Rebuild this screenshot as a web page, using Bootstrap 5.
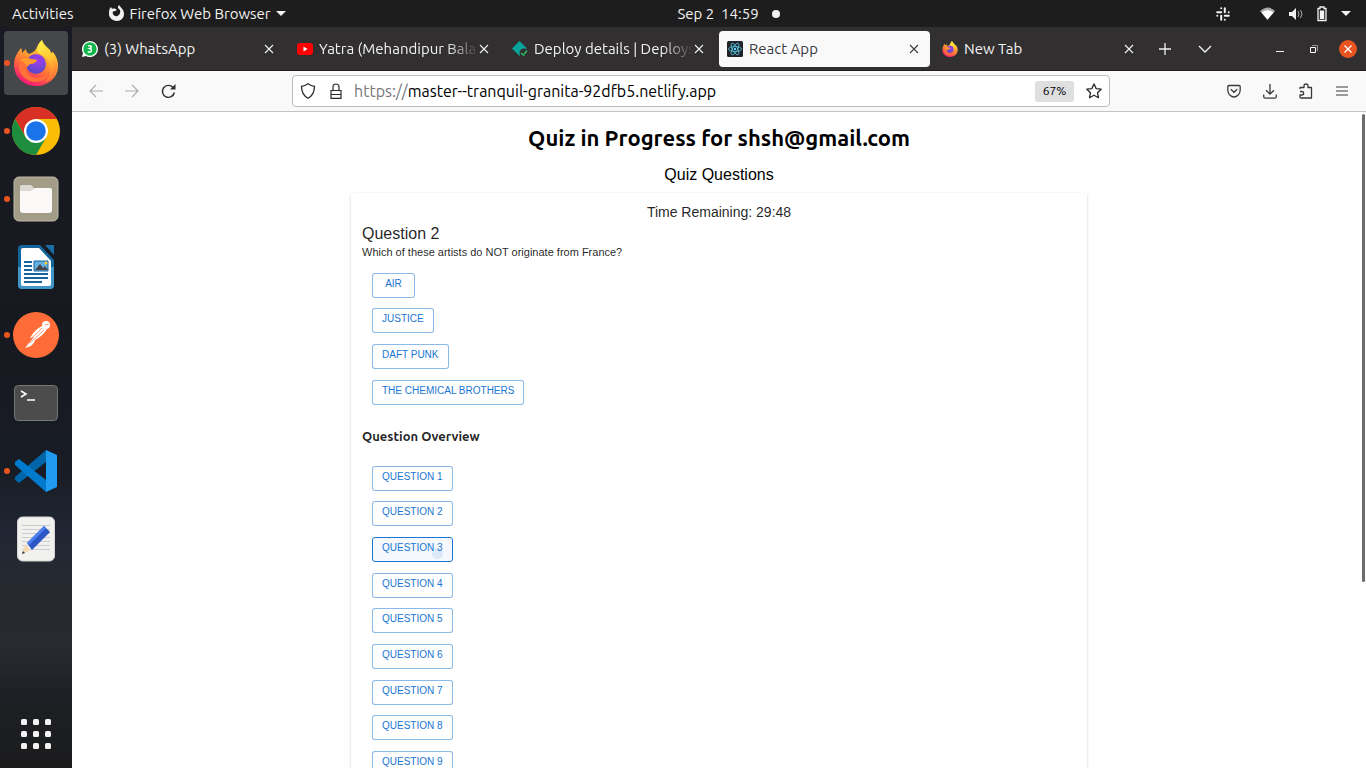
<!DOCTYPE html>
<html lang="en">
<head>
<meta charset="utf-8">
<meta name="viewport" content="width=device-width, initial-scale=1">
<title>React App</title>
<link href="https://cdn.jsdelivr.net/npm/bootstrap@5.3.0/dist/css/bootstrap.min.css" rel="stylesheet">
<style>
  body { font-family: Ubuntu, "Noto Sans", sans-serif; font-size: 15px; line-height: 20px; color: #000; background: #fff; }
  button, input { font: inherit; color: inherit; }
  svg { display: block; flex: none; }
  .plain { border: 0; background: none; padding: 0; white-space: nowrap; }
  .grow { flex: 1; min-width: 0; min-height: 0; }

  .system-bar { height: 27px; flex: none; background: #1d1d1d; color: #f2f2f2; display: grid; grid-template-columns: 7fr auto 6fr; align-items: center; padding: 0 15px 0 12px; }
  .app-menu { margin-left: 34px; gap: 5px; }
  .indicators { gap: 14px; }
  .tray { margin-right: 16px; }
  .dock { width: 72px; padding: 4px 4px 0; background: linear-gradient(#191a22 0%, #171920 40%, #181c24 60%, #202633 68%, #262a30 76%, #272a31 84%, #1d2024 90%, #1b1b1c 100%); }
  .dock-app { position: relative; width: 64px; height: 64px; margin-bottom: 4px; border-radius: 4px; display: flex; align-items: center; justify-content: center; }
  .dock-app.current { background: #46474b; }
  .dock-app.running::before { content: ""; position: absolute; left: 0; top: 29px; width: 6px; height: 6px; border-radius: 50%; background: #e95420; }

  .tab-strip { height: 44px; background: #322f30; color: #f2f2f2; border-bottom: 1px solid #1f1d1e; padding: 1px 1px 0 2px; }
  .browser-tab { height: 36px; margin-right: 4px; padding: 0 11px 0 8px; border-radius: 4px; flex: 0 1 211px; min-width: 0; }
  .browser-tab.last { margin-right: 0; }
  .browser-tab.current { background: #f9f9fa; color: #3c3b3d; }
  .tab-title { flex: 1; min-width: 0; overflow: hidden; text-align: left; margin-left: 6px; }
  .tab-title.faded { -webkit-mask-image: linear-gradient(to left, transparent, #000 32px); mask-image: linear-gradient(to left, transparent, #000 32px); }
  .tab-tool { width: 40px; height: 30px; }
  .window-tool { width: 34px; height: 34px; }
  .toolbar-row { height: 41px; background: #f9f9fa; border-bottom: 1px solid #c4c4c6; color: #3a3a3c; padding: 0 6px; }
  .tool { width: 36px; height: 30px; }
  .address { height: 32px; flex: 0 1 818px; min-width: 0; background: #fff; border: 1px solid #bdbdc0; border-radius: 4px; padding: 0 7px; font-size: 16px; }
  .padlock { margin: 0 12px 0 14px; }
  .address label { color: #77777a; }
  .address input { border: 0; outline: 0; padding: 0; background: transparent; color: #000; }
  .zoom-level { background: #dfdfe0; border-radius: 3px; font-size: 12px; width: 39px; height: 21px; color: #000; }

  .viewport { position: relative; overflow: hidden; }
  .scroll-thumb { position: absolute; right: 1px; top: 2px; width: 3px; height: 61vh; background: #6b6b6b; border-radius: 2px; }
  .quiz { font-family: "Liberation Sans", Arial, sans-serif; }
  .quiz-title { font: bold 22px/28px Ubuntu, "Noto Sans", sans-serif; margin: 12px 0 0; }
  .quiz-sub { font-size: 16px; line-height: 24px; margin: 11px 0 6px; }
  .quiz-sheet { width: 100%; max-width: 736px; margin: 0 auto; padding: 10px 11px 11px; border-radius: 3px; color: rgba(0,0,0,.87); box-shadow: 0 1px 3px rgba(0,0,0,.2); }
  .timer { font-size: 14px; line-height: 18px; margin: 0; }
  .question-title { font-size: 16px; line-height: 22px; margin: 2px 0 0; }
  .question-text { font-size: 11px; line-height: 14px; margin: 0 0 14px; }
  .overview-title { font: bold 13px/18px Ubuntu, "Noto Sans", sans-serif; margin: 12px 0 21px; }
  .choices { display: flex; flex-direction: column; align-items: flex-start; padding-left: 10px; }
  .choice { min-width: 43px; height: 25px; margin-bottom: 11px; padding: 0 9px 3px; border: 1px solid rgba(25,118,210,.5); border-radius: 3px; background: #fff; color: #1976d2; font-size: 10px; line-height: 12px; text-transform: uppercase; }
  .choice:nth-child(3n+1) { margin-bottom: 10px; }
  .choice.hovered { position: relative; background: #f5f9fd; border-color: #1976d2; }
  .choice.hovered::after { content: ""; position: absolute; right: 9px; bottom: 2px; width: 11px; height: 11px; border-radius: 50%; background: rgba(25,118,210,.12); }
</style>
</head>
<body class="vh-100 overflow-hidden d-flex flex-column">

<svg width="0" height="0" class="position-absolute" aria-hidden="true">
  <defs>
    <linearGradient id="foxBody" x1=".8" y1="0" x2=".3" y2="1"><stop offset="0" stop-color="#ffe63b"/><stop offset=".35" stop-color="#ffb22e"/><stop offset=".65" stop-color="#ff6a3a"/><stop offset="1" stop-color="#f2127c"/></linearGradient>
    <radialGradient id="foxGlobe" cx=".6" cy=".3" r=".8"><stop offset="0" stop-color="#a13bf0"/><stop offset=".5" stop-color="#7a46d8"/><stop offset="1" stop-color="#4a46c0"/></radialGradient>
    <linearGradient id="foxTail" x1="0" y1="0" x2=".4" y2="1"><stop offset="0" stop-color="#fff44f"/><stop offset=".6" stop-color="#ffc633"/><stop offset="1" stop-color="#ff7b35"/></linearGradient>
    <symbol id="firefox" viewBox="0 0 46 46">
      <path d="M8 8c1 2 1 3 1 5l4-4c0 2 1 4 3 5 5-2 7-4 8-7 1-3 3-5 5-7 1 4 5 7 8 10l1 3 2-1c3 4 5 8 5 14 0 12-10 20-22 20S1 37 1 25C1 18 4 13 8 8z" fill="url(#foxBody)"/>
      <path d="M29 0c1 5 5 7 8 11 2 3 3 6 3 10 1-3 0-6-1-9 3 3 5 8 5 13 0 8-5 14-12 17 5-5 7-11 5-18-2-7-7-9-12-11-2-5 1-10 4-13z" fill="url(#foxTail)"/>
      <circle cx="23" cy="24" r="10" fill="url(#foxGlobe)"/>
      <path d="M7 20c3-3 7-4 11-1l6 1c-1 3-5 4-7 4-1 1-3 3-4 5 1 5 5 9 11 9 6 0 10-3 13-8-1 7-7 12-15 12S6 35 6 27z" fill="#ff7139"/>
      <path d="M7 20c4-3 8-2 11-1l6 1c-1 3-5 4-7 4l-3 2c-2-3-4-4-7-6z" fill="#ff9b2e"/>
    </symbol>
    <symbol id="cross" viewBox="0 0 10 10"><path d="M1 1l8 8M9 1l-8 8" stroke="currentColor" stroke-width="1.1" fill="none"/></symbol>
  </defs>
</svg>

<header class="system-bar">
  <div class="d-flex align-items-center">
    <button class="plain">Activities</button>
    <button class="plain app-menu d-flex align-items-center">
      <svg width="17" height="17" viewBox="0 0 17 17"><path d="M3 2l1 2c2-1 4 0 5 1L7 6c-2 0-3 1-2 3 1 3 6 3 7-1 1-3-1-4-2-5 0-1 0-2 1-3 1 2 5 4 5 9 0 4-3 7-7 7s-8-3-8-7c0-3 0-5 2-7z" fill="#f2f2f2"/></svg>
      <span>Firefox Web Browser</span>
      <svg width="10" height="6" viewBox="0 0 10 6"><path d="M0 0h10L5 5z" fill="#f2f2f2"/></svg>
    </button>
  </div>
  <button class="plain d-flex align-items-center"><span>Sep 2&nbsp; 14:59</span>
    <svg class="ms-2" width="14" height="10" viewBox="0 0 14 10"><circle cx="9" cy="5" r="4" fill="#f2f2f2"/></svg></button>
  <div class="indicators d-flex align-items-center justify-content-end">
    <svg class="tray" width="14" height="14" viewBox="0 0 14 14" fill="none" stroke="#f2f2f2" stroke-width="2" stroke-linecap="round"><path d="M1.200 5.200h4M5.200 1.300v.01M8.800 1.200v4M12.700 5.200h.01M8.800 8.800h4M8.800 12.700v.01M5.200 8.800v4M1.300 8.800h.01"/></svg>
    <svg width="15" height="13" viewBox="0 0 15 13"><path d="M0 4Q7.500-3 15 4L7.500 13z" fill="#aaa"/><path d="M1.500 5.500Q7.500 1 13.500 5.500L7.500 12.500z" fill="#fff"/></svg>
    <svg width="14" height="14" viewBox="0 0 14 14"><path d="M0 5h3l4-4v12L3 9H0z" fill="#f2f2f2"/><path d="M9 4q2 3 0 6M11.500 3q3 4 0 8" stroke="#aaa" fill="none"/></svg>
    <svg width="10" height="16" viewBox="0 0 10 16"><path d="M3 1h4v1.500h2v12H1v-12h2z" fill="none" stroke="#f2f2f2" stroke-width="1.300"/><path d="M2.800 4.500h4.400v8.500H2.800z" fill="#f2f2f2"/></svg>
    <svg width="10" height="6" viewBox="0 0 10 6"><path d="M0 0h10L5 5z" fill="#f2f2f2"/></svg>
  </div>
</header>

<div class="grow d-flex">
  <nav class="dock d-flex flex-column flex-shrink-0" aria-label="Applications">
    <button class="plain dock-app current running" aria-label="Firefox"><svg width="46" height="46"><use href="#firefox"/></svg></button>
    <button class="plain dock-app running" aria-label="Chrome"><svg width="48" height="48" viewBox="0 0 48 48"><circle cx="24" cy="24" r="24" fill="#fbbc04"/><path d="M24 0a24 24 0 0 1 21 12H24L13.600 30 3.200 12A24 24 0 0 1 24 0z" fill="#d93025"/><path d="M3.200 12A24 24 0 0 0 24 48L34.400 30H13.600z" fill="#1e8e3e"/><circle cx="24" cy="24" r="12" fill="#fff"/><circle cx="24" cy="24" r="9.800" fill="#1a73e8"/></svg></button>
    <button class="plain dock-app running" aria-label="Files"><svg width="46" height="46" viewBox="0 0 46 46"><rect x="1" y="1" width="44" height="44" rx="5" fill="#a39d88" stroke="#beb9a8"/><path d="M7 13V11q0-2 2-2h9l4 4h14q2 0 2 2v4H7z" fill="#dedad2"/><path d="M7 15h11l4-3h15q2 0 2 2v20q0 3-3 3H10q-3 0-3-3z" fill="#faf9f7"/></svg></button>
    <button class="plain dock-app" aria-label="Writer"><svg width="38" height="46" viewBox="0 0 38 46"><path d="M5 1h18l14 15v25q0 4-4 4H5q-4 0-4-4V5q0-4 4-4z" fill="#15659d"/><path d="M1 23h36v18q0 4-4 4H5q-4 0-4-4z" fill="#3f96c9"/><path d="M6 4h16l12 13v23q0 2-2 2H6q-2 0-2-2V6q0-2 2-2z" fill="#fff"/><path d="M28 1h9v10z" fill="#1b6da6"/><path d="M7 18h8M7 22h8M7 26h8M7 30h24M7 34h24M7 38h18" stroke="#15659d" stroke-width="2"/><path d="M17 17h14v10H17z" fill="#64b2e3" stroke="#15659d"/><path d="M18 26l5-6 3 4 2-2 3 4z" fill="#444"/><circle cx="29" cy="19" r="1.500" fill="#fc3"/></svg></button>
    <button class="plain dock-app running" aria-label="Postman"><svg width="46" height="46" viewBox="0 0 46 46"><circle cx="23" cy="23" r="23" fill="#ff6c37"/><circle cx="33" cy="13" r="4" fill="#fff"/><path d="M29 14q-7 3-12 12l4-1-9 11-3 1 9-3q4-4 4-6 8-4 12-11z" fill="#fff"/><path d="M31 18L17 31M29 16L18 27M32 13l4-1" stroke="#ff6c37" stroke-width=".7"/></svg></button>
    <button class="plain dock-app" aria-label="Terminal"><svg width="44" height="36" viewBox="0 0 44 36"><rect x=".5" y=".5" width="43" height="35" rx="4" fill="#4c4c4c" stroke="#777"/><path d="M7 6l5 3-5 3M13 15h8" fill="none" stroke="#fff" stroke-width="1.600"/></svg></button>
    <button class="plain dock-app running" aria-label="Code"><svg width="42" height="42" viewBox="0 0 42 42"><path d="M31 0L0 27v3l4 3L31 12z" fill="#0065a9"/><path d="M31 42L0 15v-3l4-3 27 21z" fill="#007acc"/><path d="M31 0l11 5v32l-11 5z" fill="#1f9cf0"/></svg></button>
    <button class="plain dock-app" aria-label="Text editor"><svg width="38" height="46" viewBox="0 0 38 46"><rect x=".5" y="1" width="37" height="44" rx="5" fill="#f1f1ef" stroke="#d4d4d0"/><path d="M5 9.500h28M5 13.500h28M5 17.500h28M5 21.500h28M5 25.500h28M5 29.500h28M5 33.500h28" stroke="#ccc"/><path d="M5 38l3-9 6 5z" fill="#f7d9b5"/><path d="M5 38l1-3 2 2z" fill="#333"/><path d="M10 27L27 10l6 6-18 18z" fill="#2a56c6"/><path d="M10 27L27 10l2 2-17 17z" fill="#4f80f0"/></svg></button>
    <button class="plain mt-auto mx-auto mb-3" aria-label="Show applications"><svg width="32" height="34" viewBox="0 0 32 34" fill="#f2f2f0"><rect x="1" y="1" width="6" height="6" rx="1.500"/><rect x="13" y="1" width="6" height="6" rx="1.500"/><rect x="25" y="1" width="6" height="6" rx="1.500"/><rect x="1" y="13" width="6" height="6" rx="1.500"/><rect x="13" y="13" width="6" height="6" rx="1.500"/><rect x="25" y="13" width="6" height="6" rx="1.500"/><rect x="1" y="25" width="6" height="6" rx="1.500"/><rect x="13" y="25" width="6" height="6" rx="1.500"/><rect x="25" y="25" width="6" height="6" rx="1.500"/></svg></button>
  </nav>

  <div class="grow d-flex flex-column">
    <div class="tab-strip d-flex align-items-center flex-shrink-0">
      <div class="browser-tab d-flex align-items-center">
        <svg width="16" height="16" viewBox="0 0 16 16"><path d="M0 16l1-4a8 8 0 1 1 3 3z" fill="#fff"/><circle cx="8" cy="8" r="6.700" fill="#12b84b"/><path d="M6 5.200q1.800-1 3 0 .8 1.600-1.400 2.400 2.600.6 1.600 2.600-1.200 1.400-3.500.5" stroke="#fff" stroke-width="1.500" fill="none"/></svg>
        <button class="plain tab-title">(3) WhatsApp</button><button class="plain" aria-label="Close tab"><svg width="10" height="10"><use href="#cross"/></svg></button>
      </div>
      <div class="browser-tab d-flex align-items-center">
        <svg width="16" height="16" viewBox="0 0 16 16"><rect y="2" width="16" height="12" rx="3" fill="#f00"/><path d="M6.500 5.500v5l4-2.500z" fill="#fff"/></svg>
        <button class="plain tab-title faded">Yatra (Mehandipur Bala</button><button class="plain" aria-label="Close tab"><svg width="10" height="10"><use href="#cross"/></svg></button>
      </div>
      <div class="browser-tab d-flex align-items-center">
        <svg width="16" height="16" viewBox="0 0 16 16"><path d="M7.500 0L15 7.500 7.500 15 0 7.500z" fill="#0aa39c"/><circle cx="12" cy="12" r="4.500" fill="#322f30"/><path d="M9 12l2.500 2L15 9.500" stroke="#27b35a" stroke-width="1.600" fill="none"/></svg>
        <button class="plain tab-title faded">Deploy details | Deploys</button><button class="plain" aria-label="Close tab"><svg width="10" height="10"><use href="#cross"/></svg></button>
      </div>
      <div class="browser-tab current d-flex align-items-center">
        <svg width="16" height="16" viewBox="0 0 16 16"><rect width="16" height="16" rx="1.500" fill="#20232a"/><g fill="none" stroke="#61dafb" stroke-width=".7"><ellipse cx="8" cy="8" rx="6.500" ry="2.500"/><ellipse cx="8" cy="8" rx="6.500" ry="2.500" transform="rotate(60 8 8)"/><ellipse cx="8" cy="8" rx="6.500" ry="2.500" transform="rotate(120 8 8)"/></g><circle cx="8" cy="8" r="1.200" fill="#61dafb"/></svg>
        <button class="plain tab-title">React App</button><button class="plain" aria-label="Close tab"><svg width="10" height="10"><use href="#cross"/></svg></button>
      </div>
      <div class="browser-tab last d-flex align-items-center">
        <svg width="16" height="16"><use href="#firefox"/></svg>
        <button class="plain tab-title">New Tab</button><button class="plain" aria-label="Close tab"><svg width="10" height="10"><use href="#cross"/></svg></button>
      </div>
      <button class="plain tab-tool d-flex align-items-center justify-content-center" aria-label="New tab"><svg width="12" height="12" viewBox="0 0 12 12"><path d="M6 0v12M0 6h12" stroke="#f2f2f2" stroke-width="1.300"/></svg></button>
      <button class="plain tab-tool d-flex align-items-center justify-content-center" aria-label="List all tabs"><svg width="14" height="8" viewBox="0 0 14 8"><path d="M1 1l6 6 6-6" stroke="#f2f2f2" stroke-width="1.300" fill="none"/></svg></button>
      <div class="d-flex ms-auto">
        <button class="plain window-tool d-flex align-items-center justify-content-center" aria-label="Minimize"><svg width="8" height="8" viewBox="0 0 8 8"><path d="M0 6.500h8" stroke="#f2f2f2"/></svg></button>
        <button class="plain window-tool d-flex align-items-center justify-content-center" aria-label="Restore"><svg width="8" height="8" viewBox="0 0 8 8"><path d="M.5 2.500h5v5h-5z" fill="none" stroke="#fff"/><path d="M2 .5h5.500V6" fill="none" stroke="#999"/></svg></button>
        <button class="plain window-tool d-flex align-items-center justify-content-center" aria-label="Close"><svg width="18" height="18" viewBox="0 0 18 18"><circle cx="9" cy="9" r="9" fill="#e95420"/><path d="M5.500 5.500l7 7M12.500 5.500l-7 7" stroke="#fff" stroke-width="1.300"/></svg></button>
      </div>
    </div>

    <div class="toolbar-row d-flex align-items-center justify-content-between flex-shrink-0">
      <div class="d-flex">
        <button class="plain tool d-flex align-items-center justify-content-center" aria-label="Back" disabled><svg width="14" height="14" viewBox="0 0 14 14"><path d="M14 7H1M7 1L1 7l6 6" stroke="#aeaeb0" stroke-width="1.200" fill="none"/></svg></button>
        <button class="plain tool d-flex align-items-center justify-content-center" aria-label="Forward" disabled><svg width="14" height="14" viewBox="0 0 14 14"><path d="M0 7h13M7 1l6 6-6 6" stroke="#aeaeb0" stroke-width="1.200" fill="none"/></svg></button>
        <button class="plain tool d-flex align-items-center justify-content-center" aria-label="Reload"><svg width="15" height="15" viewBox="0 0 15 15"><path d="M13.300 8.500a6 6 0 1 1-1.300-5l1 1" stroke="#2f2f31" stroke-width="1.400" fill="none"/><path d="M14.500 0v5.500H9z" fill="#2f2f31"/></svg></button>
      </div>
      <div class="address d-flex align-items-center">
        <svg width="16" height="16" viewBox="0 0 16 16"><path d="M8 .8q3 2.200 6.500 2.500 0 8.500-6.500 12-6.500-3.500-6.500-12Q5 3 8 .8z" fill="none" stroke="#2b2b2d" stroke-width="1.300"/></svg>
        <svg class="padlock" width="12" height="16" viewBox="0 0 12 16"><path d="M1 7.500h10v7.800H1zM3 7.500V4q0-3 3-3t3 3v3.500M1 11.500h10" fill="none" stroke="#2b2b2d" stroke-width="1.200"/></svg>
        <label for="url">https://</label><input id="url" class="grow" type="text" value="master--tranquil-granita-92dfb5.netlify.app">
        <button class="plain zoom-level">67%</button>
        <button class="plain ms-2 ps-1" aria-label="Bookmark"><svg width="16" height="16" viewBox="0 0 16 16"><path d="M8 1l2.200 4.600 5 .6-3.700 3.500 1 5L8 12.200l-4.500 2.500 1-5L.8 6.200l5-.6z" fill="none" stroke="#2b2b2d" stroke-width="1.300" stroke-linejoin="round"/></svg></button>
      </div>
      <div class="d-flex">
        <button class="plain tool d-flex align-items-center justify-content-center" aria-label="Pocket"><svg width="14" height="14" viewBox="0 0 14 14"><path d="M2 1.500h10q1.200 0 1.200 1.200V6q0 3-2 5Q7 15 2.800 11q-2-2-2-5V2.700q0-1.200 1.200-1.200zM3.800 5.200L7 8.300l3.200-3.100" fill="none" stroke="currentColor" stroke-width="1.300"/></svg></button>
        <button class="plain tool d-flex align-items-center justify-content-center" aria-label="Downloads"><svg width="14" height="15" viewBox="0 0 14 15"><path d="M7 0v10M3 6.200l4 4 4-4M.7 10.500v2q0 1.700 1.700 1.700h9.200q1.700 0 1.700-1.700v-2" fill="none" stroke="currentColor" stroke-width="1.300"/></svg></button>
        <button class="plain tool d-flex align-items-center justify-content-center" aria-label="Extensions"><svg width="14" height="16" viewBox="0 0 14 16"><path d="M1 6V4.500h4V3q0-2 2-2t2 2v1.500h3.500V15H2q-1 0-1-1v-2h2q1.700 0 1.700-1.700T3 8.500H1" fill="none" stroke="currentColor" stroke-width="1.300" stroke-linejoin="round"/></svg></button>
        <button class="plain tool d-flex align-items-center justify-content-center" aria-label="Menu"><svg width="12" height="10" viewBox="0 0 12 10"><path d="M0 1h12M0 5h12M0 9h12" stroke="currentColor" stroke-width="1.200"/></svg></button>
      </div>
    </div>

    <main class="viewport quiz grow">
      <h1 class="quiz-title text-center">Quiz in Progress for shsh@gmail.com</h1>
      <h2 class="quiz-sub text-center fw-normal">Quiz Questions</h2>
      <section class="quiz-sheet">
        <p class="timer text-center">Time Remaining: 29:48</p>
        <h3 class="question-title fw-normal">Question 2</h3>
        <p class="question-text">Which of these artists do NOT originate from France?</p>
        <div class="choices">
          <button class="choice">Air</button>
          <button class="choice">Justice</button>
          <button class="choice">Daft Punk</button>
          <button class="choice">The Chemical Brothers</button>
        </div>
        <h3 class="overview-title">Question Overview</h3>
        <div class="choices">
          <button class="choice">Question 1</button>
          <button class="choice">Question 2</button>
          <button class="choice hovered">Question 3</button>
          <button class="choice">Question 4</button>
          <button class="choice">Question 5</button>
          <button class="choice">Question 6</button>
          <button class="choice">Question 7</button>
          <button class="choice">Question 8</button>
          <button class="choice">Question 9</button>
        </div>
      </section>
      <div class="scroll-thumb"></div>
    </main>
  </div>
</div>
<script src="https://cdn.jsdelivr.net/npm/bootstrap@5.3.0/dist/js/bootstrap.bundle.min.js"></script>
</body>
</html>
